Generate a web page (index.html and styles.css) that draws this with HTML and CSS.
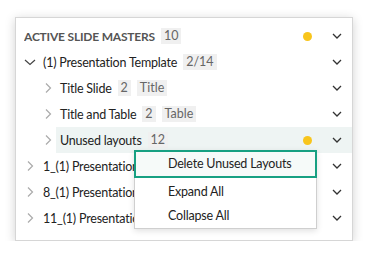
FILE: index.html
```html
<!DOCTYPE html>
<html>
<head>
<meta charset="utf-8">
<link rel="stylesheet" href="styles.css">
</head>
<body>
<div class="panel">
  <div class="row header">
    <div class="content">
      <span class="title">ACTIVE SLIDE MASTERS</span><span class="badge">10</span>
    </div>
    <span class="dot"></span>
    <svg class="more" width="10" height="6" viewBox="0 0 10 6"><path d="M1 1l4 4 4-4" fill="none" stroke="#333" stroke-width="1.3"/></svg>
  </div>
  <div class="row l0">
    <svg class="tog" width="16" height="10" viewBox="0 0 16 10"><path d="M3 3l5 4.5 5-4.5" fill="none" stroke="#444" stroke-width="1.2"/></svg>
    <div class="content"><span class="label">(1) Presentation Template</span><span class="badge">2/14</span></div>
    <svg class="more" width="10" height="6" viewBox="0 0 10 6"><path d="M1 1l4 4 4-4" fill="none" stroke="#333" stroke-width="1.3"/></svg>
  </div>
  <div class="row l1">
    <svg class="tog" width="16" height="12" viewBox="0 0 16 12"><path d="M6 1.5l4.5 4.5-4.5 4.5" fill="none" stroke="#aaa" stroke-width="1.2"/></svg>
    <div class="content"><span class="label">Title Slide</span><span class="badge">2</span><span class="badge">Title</span></div>
    <svg class="more" width="10" height="6" viewBox="0 0 10 6"><path d="M1 1l4 4 4-4" fill="none" stroke="#333" stroke-width="1.3"/></svg>
  </div>
  <div class="row l1">
    <svg class="tog" width="16" height="12" viewBox="0 0 16 12"><path d="M6 1.5l4.5 4.5-4.5 4.5" fill="none" stroke="#aaa" stroke-width="1.2"/></svg>
    <div class="content"><span class="label">Title and Table</span><span class="badge">2</span><span class="badge">Table</span></div>
    <svg class="more" width="10" height="6" viewBox="0 0 10 6"><path d="M1 1l4 4 4-4" fill="none" stroke="#333" stroke-width="1.3"/></svg>
  </div>
  <div class="row l1 active">
    <svg class="tog" width="16" height="12" viewBox="0 0 16 12"><path d="M6 1.5l4.5 4.5-4.5 4.5" fill="none" stroke="#aaa" stroke-width="1.2"/></svg>
    <div class="content hl"><span class="label">Unused layouts</span><span class="badge">12</span><span class="spacer"></span><span class="dot"></span>
    <svg class="more" width="10" height="6" viewBox="0 0 10 6"><path d="M1 1l4 4 4-4" fill="none" stroke="#333" stroke-width="1.3"/></svg></div>
  </div>
  <div class="row l0">
    <svg class="tog" width="16" height="12" viewBox="0 0 16 12"><path d="M6 1.5l4.5 4.5-4.5 4.5" fill="none" stroke="#aaa" stroke-width="1.2"/></svg>
    <div class="content covered"><span class="label">1_(1) Presentation Template</span></div>
    <svg class="more" width="10" height="6" viewBox="0 0 10 6"><path d="M1 1l4 4 4-4" fill="none" stroke="#333" stroke-width="1.3"/></svg>
  </div>
  <div class="row l0">
    <svg class="tog" width="16" height="12" viewBox="0 0 16 12"><path d="M6 1.5l4.5 4.5-4.5 4.5" fill="none" stroke="#aaa" stroke-width="1.2"/></svg>
    <div class="content covered"><span class="label">8_(1) Presentation Template</span></div>
    <svg class="more" width="10" height="6" viewBox="0 0 10 6"><path d="M1 1l4 4 4-4" fill="none" stroke="#333" stroke-width="1.3"/></svg>
  </div>
  <div class="row l0">
    <svg class="tog" width="16" height="12" viewBox="0 0 16 12"><path d="M6 1.5l4.5 4.5-4.5 4.5" fill="none" stroke="#aaa" stroke-width="1.2"/></svg>
    <div class="content covered"><span class="label">11_(1) Presentation Template</span></div>
    <svg class="more" width="10" height="6" viewBox="0 0 10 6"><path d="M1 1l4 4 4-4" fill="none" stroke="#333" stroke-width="1.3"/></svg>
  </div>

  <div class="menu">
    <div class="item selected">Delete Unused Layouts</div>
    <div class="item">Expand All</div>
    <div class="item">Collapse All</div>
  </div>
</div>
</body>
</html>
```
FILE: styles.css
```css
* { box-sizing: border-box; }
body {
  margin: 0;
  background: #fff;
  font-family: "Lato", "Noto Sans", sans-serif;
  font-size: 12.5px;
  letter-spacing: -0.2px;
  color: #222;
}
.panel {
  position: relative;
  margin: 17px 0 0 15px;
  width: 338px;
  height: 224px;
  border: 1px solid #d6d6d6;
  background: #fff;
  box-shadow: 0 2px 10px rgba(0,0,0,0.18);
  padding-top: 5px;
  overflow: hidden;
}
.row {
  display: flex;
  align-items: center;
  height: 26px;
  padding-right: 10px;
}
.row.header { padding-left: 8px; }
.row.l0 { padding-left: 6px; }
.row.l1 { padding-left: 24px; }
.row.active { padding-right: 0; }
.tog { flex: none; }
.content {
  flex: 1;
  display: flex;
  align-items: center;
  height: 100%;
  min-width: 0;
  white-space: nowrap;
  overflow: hidden;
}
.content.covered {
  flex: 0 0 96px;
  margin-right: auto;
}
.row.l0 .content { padding-left: 5px; }
.row.l1 .content { padding-left: 4px; }
.content.hl {
  background: #eef4f3;
  padding-right: 10px;
}
.spacer { flex: 1; }
.title {
  font-weight: 700;
  font-size: 12px;
  color: #555;
}
.label { color: #222; }
.badge {
  margin-left: 6px;
  background: #f0f0f0;
  color: #666;
  padding: 0 3px;
  line-height: 16px;
  height: 16px;
  letter-spacing: 0;
}
.dot {
  flex: none;
  width: 9px;
  height: 9px;
  border-radius: 50%;
  background: #f8c51c;
  margin-right: 20px;
}
.more { flex: none; }
.menu {
  position: absolute;
  left: 118px;
  top: 132px;
  width: 183px;
  background: #fff;
  border: 1px solid #cfcfcf;
  box-shadow: 0 2px 6px rgba(0,0,0,0.12);
  padding-bottom: 1px;
}
.item {
  height: 24px;
  line-height: 24px;
  padding-left: 33px;
  color: #222;
}
.item + .item { line-height: 25px; }
.item.selected {
  height: 28px;
  line-height: 24px;
  margin: -1px -1px 1px -1px;
  padding-left: 32px;
  border: 2px solid #17a082;
  background: #f6faf9;
}
```
